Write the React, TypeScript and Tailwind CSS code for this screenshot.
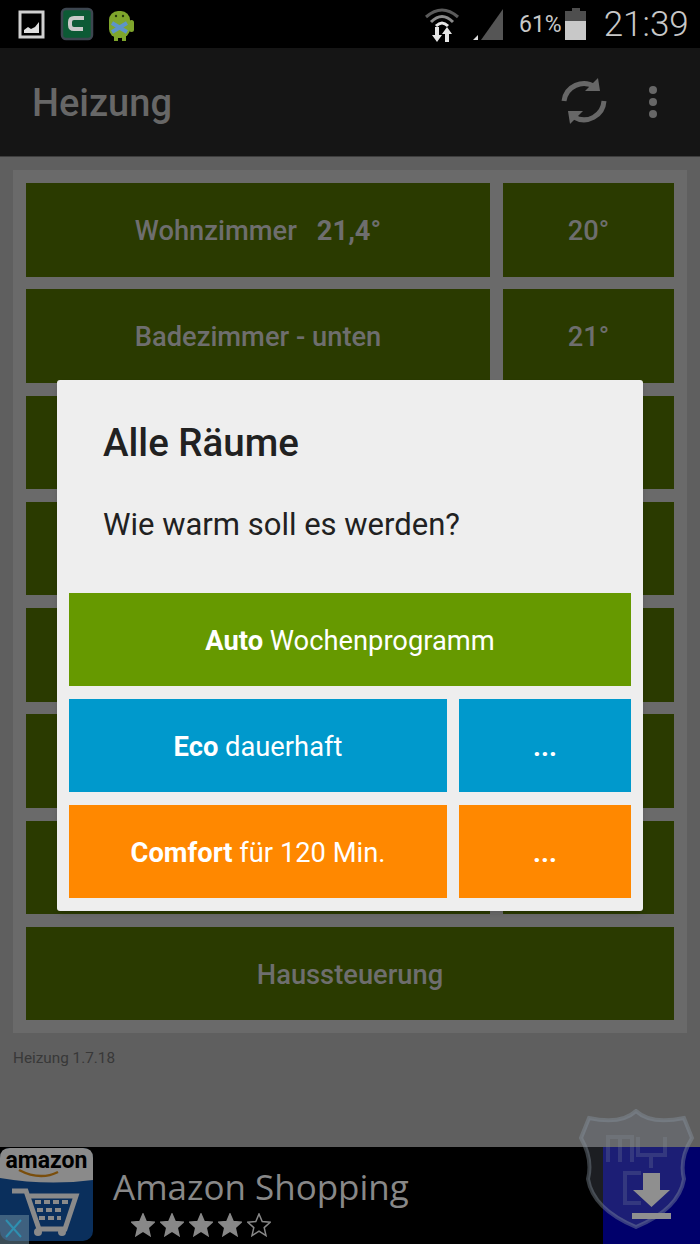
import React from 'react';

const font = { fontFamily: 'Roboto, sans-serif' };

const rooms = [
  { name: 'Wohnzimmer', temp: '21,4°', set: '20°' },
  { name: 'Badezimmer - unten', temp: '', set: '21°' },
  { name: '', temp: '', set: '' },
  { name: '', temp: '', set: '' },
  { name: '', temp: '', set: '' },
  { name: '', temp: '', set: '' },
  { name: '', temp: '', set: '' },
];

const StatusIcons = () => (
  <div className="flex items-center h-12 bg-black">
    {/* gallery notification */}
    <svg width="28" height="30" viewBox="0 0 28 30" className="ml-[18px]">
      <rect x="2" y="3" width="23" height="25" fill="none" stroke="#d0d0d0" strokeWidth="3" />
      <path d="M6 24v-3l4-3 3 2 4-2 4-5v11z" fill="#e0e0e0" />
    </svg>
    <svg width="34" height="34" viewBox="0 0 34 34" className="ml-[14px]">
      <rect x="2" y="2" width="30" height="30" rx="4" fill="#0c5a35" stroke="#3d4650" strokeWidth="2.5" />
      <path d="M24 11h-10q-4 0-4 4v3q0 4 4 4h9" fill="none" stroke="#c9c9c9" strokeWidth="4" />
    </svg>
    <svg width="30" height="36" viewBox="0 0 30 36" className="ml-[12px]">
      <rect x="3" y="5" width="21" height="27" rx="9" fill="#7fa52c" />
      <rect x="23" y="14" width="5" height="12" rx="2.5" fill="#7fa52c" />
      <rect x="8" y="30" width="4" height="5" fill="#7fa52c" />
      <rect x="16" y="30" width="4" height="5" fill="#7fa52c" />
      <path d="M6 17l15 9M21 17L6 26" stroke="#5d94c9" strokeWidth="4" />
      <circle cx="10" cy="10" r="1.2" fill="#25380c" />
      <circle cx="17" cy="10" r="1.2" fill="#25380c" />
    </svg>
    <svg width="36" height="36" viewBox="0 0 36 36" className="ml-[288px]">
      <path d="M2 11Q18-3 34 11" fill="none" stroke="#5a5a5a" strokeWidth="3" />
      <path d="M7 16Q18 5 29 16" fill="none" stroke="#8a8a8a" strokeWidth="3" />
      <path d="M12 20Q18 14 24 20" fill="none" stroke="#e6e6e6" strokeWidth="3" />
      <path d="M11 21h4v8h3l-5 7-5-7h3zM21 36h4v-8h3l-5-7-5 7h3z" fill="#e6e6e6" />
    </svg>
    <svg width="32" height="32" viewBox="0 0 32 32" className="ml-[12px]">
      <path d="M31 1v31H9z" fill="#555" />
      <path d="M1 32l5-5v5z" fill="#ddd" />
    </svg>
    <span className="ml-[15px] pt-[2px] text-[23px] text-[#c8c8c8]" style={font}>61%</span>
    <svg width="22" height="32" viewBox="0 0 22 32" className="ml-[3px]">
      <path d="M7 0h8v3h6v10H0V3h7z" fill="#4e4e4e" />
      <rect x="0" y="13" width="21" height="19" fill="#c8c8c8" />
    </svg>
    <span className="ml-[17px] pt-[3px] text-[35px] text-[#c8c8c8] font-light" style={font}>21:39</span>
  </div>
);

const AppBar = () => (
  <div className="flex items-center h-[109px] bg-[#151515] border-b border-[#3d3d3d]">
    <span className="ml-8 pt-[3px] text-[38px] font-medium text-[#676767]" style={font}>Heizung</span>
    <svg width="46" height="50" viewBox="0 0 46 50" className="ml-auto">
      <g fill="none" stroke="#676767" strokeWidth="5">
        <path d="M3 24A20 20 0 0 1 34 10" />
        <path d="M43 24A20 20 0 0 1 13 40" />
      </g>
      <path d="M37 1l2 13H24z" fill="#676767" />
      <path d="M9 47L7 34h15z" fill="#676767" />
    </svg>
    <div className="ml-[42px] mr-[43px] flex flex-col gap-[4px]">
      <div className="w-2 h-2 rounded-full bg-[#676767]" />
      <div className="w-2 h-2 rounded-full bg-[#676767]" />
      <div className="w-2 h-2 rounded-full bg-[#676767]" />
    </div>
  </div>
);

const Tile = ({ className, children }: { className: string; children?: React.ReactNode }) => (
  <div className={`flex items-center justify-center h-[93.5px] pt-[3px] bg-[#2a3a00] text-[27.3px] font-medium text-[#6e6e6e] ${className}`} style={font}>
    {children}
  </div>
);

const DialogButton = ({ className, color, children }: { className: string; color: string; children: React.ReactNode }) => (
  <div className={`flex items-center justify-center h-[93px] pt-[3px] text-[27.3px] text-white ${color} ${className}`} style={font}>
    {children}
  </div>
);

const Dialog = () => (
  <div className="absolute left-[57px] top-[380px] w-[586px] h-[531px] rounded-[3px] bg-[#eeeeee] shadow-md" style={font}>
    <div className="ml-[46px] mt-[40px] text-[38.500px] leading-[46px] font-medium text-[#212121]">Alle Räume</div>
    <div className="ml-[46px] mt-[39px] text-[31px] leading-[40px] text-[#212121]">Wie warm soll es werden?</div>
    <div className="flex flex-col gap-[13px] mx-3 mt-[48px]">
      <DialogButton className="w-full" color="bg-[#669900]">
        <b className="font-bold">Auto</b>&nbsp;Wochenprogramm
      </DialogButton>
      <div className="flex gap-3">
        <DialogButton className="w-[378px]" color="bg-[#0099cc]">
          <b className="font-bold">Eco</b>&nbsp;dauerhaft
        </DialogButton>
        <DialogButton className="w-[172px] font-bold" color="bg-[#0099cc]">...</DialogButton>
      </div>
      <div className="flex gap-3">
        <DialogButton className="w-[378px]" color="bg-[#ff8800]">
          <b className="font-bold">Comfort</b>&nbsp;für 120 Min.
        </DialogButton>
        <DialogButton className="w-[172px] font-bold" color="bg-[#ff8800]">...</DialogButton>
      </div>
    </div>
  </div>
);

const AmazonIcon = () => (
  <svg width="94" height="96" viewBox="0 0 94 96" className="absolute left-0 top-[1px]">
    <rect width="93" height="93" rx="10" fill="#0a2f5c" />
    <path d="M0 10Q0 0 10 0h73q10 0 10 10v22Q47 38 0 30z" fill="#8a8a8a" />
    <text x="46.500" y="20" textAnchor="middle" fontSize="23" fontWeight="700" fill="#000" style={font}>amazon</text>
    <path d="M19 22Q40 33 58 24" fill="none" stroke="#7a4e0c" strokeWidth="2.500" />
    <path d="M12 43h14l13 38h26l11-33H28" fill="none" stroke="#8a8a8a" strokeWidth="5" />
    <path d="M35 52h6v4h-6zM44 52h6v4h-6zM53 52h6v4h-6zM62 52h6v4h-6zM37 60h6v4h-6zM46 60h6v4h-6zM55 60h6v4h-6zM39 68h6v4h-6zM48 68h6v4h-6zM57 68h4v4h-4z" fill="#8a8a8a" />
    <circle cx="38" cy="84" r="4" fill="#8a8a8a" />
    <circle cx="62" cy="84" r="4" fill="#8a8a8a" />
    <rect x="0" y="67" width="29" height="29" fill="#6b8a9c" opacity="0.55" />
    <path d="M6 72l15 17M21 72L6 89" stroke="#2f8fb0" strokeWidth="2" />
  </svg>
);

const Star = ({ filled }: { filled: boolean }) => (
  <svg width="24" height="24" viewBox="0 0 24 24">
    <path
      d="M12 1l3.2 7.6 8 .7-6 5.3 1.800 8L12 18.200 5 22.600l1.800-8-6-5.300 8-.7z"
      fill={filled ? '#888' : 'none'}
      stroke="#888"
      strokeWidth="1.500"
    />
  </svg>
);

const Shield = () => (
  <svg width="116" height="120" viewBox="0 0 116 120" className="absolute left-[579px] top-[1109px]">
    <path
      d="M57 2Q72 16 105 9l8 20Q100 50 105 70 100 100 57 118 14 100 9 70 14 50 2 29l8-20Q42 16 57 2z"
      fill="#7f8a99"
      fillOpacity="0.22"
      stroke="#8a95a3"
      strokeOpacity="0.4"
      strokeWidth="4"
    />
    <path d="M29 53V28h24v25M41 28v25M59 28v18h27V28M72 46v13" fill="none" stroke="#8f98a5" strokeOpacity="0.22" strokeWidth="4" />
    <path d="M62 64H46v30h16" fill="none" stroke="#8f98a5" strokeOpacity="0.22" strokeWidth="4" />
    <path d="M64 64h17v17h10L72.500 98 54 81h10z" fill="#8f8f8f" />
    <rect x="53" y="104" width="39" height="6" fill="#8f8f8f" />
  </svg>
);

export default function App() {
  return (
    <div className="relative w-[700px] h-[1244px] overflow-hidden bg-[#5f5f5f]">
      <StatusIcons />
      <AppBar />

      <div className="mx-[13px] mt-[13px] flex flex-col gap-[12.8px] bg-[#6a6a6a] p-[13px] h-[863px]">
        {rooms.map((room, i) => (
          <div key={i} className="flex gap-[13px]">
            <Tile className="w-[464px]">
              {room.name}
              {room.temp && <b className="ml-5 font-bold">{room.temp}</b>}
            </Tile>
            <Tile className="w-[171px]">{room.set}</Tile>
          </div>
        ))}
        <Tile className="w-full">Haussteuerung</Tile>
      </div>

      <div className="ml-[13px] mt-[14px] text-[15.300px] text-[#383838]" style={font}>Heizung 1.7.18</div>

      {/* ad banner */}
      <div className="absolute left-0 top-[1147px] w-[700px] h-[97px] bg-black">
        <AmazonIcon />
        <div className="absolute left-[113px] top-[16px] text-[35px] leading-[48px] text-[#888888]" style={{ fontFamily: '"Open Sans", sans-serif' }}>
          Amazon Shopping
        </div>
        <div className="absolute left-[131px] top-[66px] flex gap-[5px]">
          <Star filled />
          <Star filled />
          <Star filled />
          <Star filled />
          <Star filled={false} />
        </div>
        <div className="absolute right-0 top-0 w-[97px] h-[97px] bg-[#00006b]" />
      </div>
      <Shield />
      <Dialog />
    </div>
  );
}
